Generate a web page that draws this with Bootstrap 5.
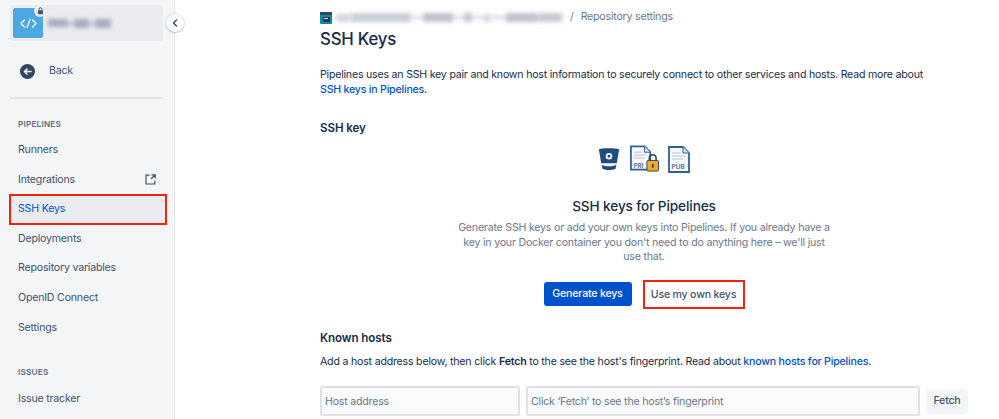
<!DOCTYPE html>
<html lang="en">
<head>
<meta charset="utf-8">
<title>SSH Keys</title>
<link href="https://cdn.jsdelivr.net/npm/bootstrap@5.3.0/dist/css/bootstrap.min.css" rel="stylesheet">
<style>
html,body{height:419px;overflow:hidden}
body{font-family:Inter,"Liberation Sans",sans-serif;font-size:10.6px;letter-spacing:-.2px;color:#172b4d;background:#fff;line-height:14.5px}
.shell{height:419px}
.side{width:175px;background:#f4f5f7;border-right:1px solid #e6e8ec;padding:5px 9px 0 10px;flex:none;position:relative}
.proj{height:36px;background:#ebecf0;border-radius:3px;padding:3px;gap:5px;width:153px}
.avatar{width:30px;height:30px;background:#4ba8e3;border-radius:2px;position:relative;flex:none}
.lockb{position:absolute;right:-3px;top:-3px;width:12px;height:12px;border-radius:50%;background:#ebecf0}
.blurbox{filter:blur(2px);gap:1px;align-items:center}
.blurbox i{display:block;background:#a5acbc}
.backrow{height:28px;margin-top:16px;padding-left:10px;gap:14px;color:#42526e}
.backic{width:15px;height:15px;flex:none}
.rule{height:2px;background:#e4e6ea;width:153px;margin-top:12px}
.grp{font-size:8.2px;font-weight:600;color:#5e6c84;letter-spacing:.2px;padding-left:8px;line-height:12px}
.grp1{margin-top:19px;margin-bottom:5.5px}
.grp2{margin-top:23.5px;margin-bottom:6px}
.item{height:29.6px;padding:0 10px 0 8px;color:#42526e;width:156px;justify-content:space-between}
.item.sel{background:#ebecf0;color:#0052cc;outline:2px solid #f5210f;outline-offset:-1px}
.toggle{position:absolute;left:166px;top:14px;width:18px;height:18px;border-radius:50%;background:#fff;box-shadow:0 0 0 1px rgba(9,30,66,.08),0 1px 2px rgba(9,30,66,.2);z-index:2}
.mainp{padding:0 31px 0 145px;flex:1;min-width:0}
.crumbs{height:13px;margin-top:11px;color:#6b778c;gap:0}
.crumbic{width:12px;height:12px;flex:none}
.ptitle{font-size:16.8px;font-weight:500;line-height:24px;letter-spacing:-.2px;margin:3px 0 0;color:#172b4d}
.intro{margin:17px 0 0;color:#172b4d;line-height:14.5px;width:610px;letter-spacing:-.21px}
a.lnk{color:#0052cc;text-decoration:none;font-weight:500}
.sub{font-size:11.6px;font-weight:600;line-height:16px;margin:0;color:#172b4d;letter-spacing:-.1px}
.sub1{margin-top:23px}
.icons{gap:9.5px;margin-top:9px;height:28px}
.empt{font-size:13.6px;font-weight:500;line-height:20px;margin:23px 0 0;color:#172b4d;letter-spacing:-.1px}
.desc{width:374.5px;color:#6b778c;margin:5px 0 0;line-height:14.6px}
.acts{gap:11px;margin-top:15px;position:relative}
.bluebtn{background:#0052cc;color:#fff;border:0;border-radius:3px;font-size:10.6px;letter-spacing:-.2px;font-weight:500;height:24px;width:88px;padding:0;line-height:24px}
.plainbtn{background:#fff;color:#42526e;border:2px solid #f5210f;border-radius:0;font-size:10.6px;letter-spacing:-.2px;font-weight:500;width:102px;height:29px;padding:0;line-height:25px}
.sub2{margin-top:21px}
.hostp{margin:8px 0 0;line-height:15px}
.hostrow{gap:6px;margin-top:17.5px}
.fld{height:30px;background:#fafbfc;border:2px solid #dfe1e6;border-radius:3px;color:#6b778c;padding:0 3px;font-size:10.6px;letter-spacing:-.2px;line-height:26px;box-shadow:none}
.fld::placeholder{color:#6b778c;opacity:1}
.fld1{width:200px;flex:none}
.fld2{width:394px;flex:none}
.fetchbtn{background:#f4f5f7;color:#42526e;border:0;border-radius:3px;font-size:10.6px;letter-spacing:-.2px;font-weight:500;width:46px;height:25px;padding:0;margin-left:0}
</style>
</head>
<body>
<div class="d-flex shell">
  <aside class="side">
    <div class="proj d-flex align-items-center">
      <div class="avatar d-flex align-items-center justify-content-center">
        <svg width="17" height="11" viewBox="0 0 17 11" fill="none" stroke="#fff" stroke-width="1.2" stroke-linecap="round" stroke-linejoin="round"><path d="M4.5 2 1 5.5 4.5 9M12.5 2 16 5.5 12.5 9M10 1.2 7 9.8"/></svg>
        <span class="lockb d-flex align-items-center justify-content-center">
          <svg width="7" height="8" viewBox="0 0 7 8"><path d="M2 3.5V2.3a1.5 1.5 0 0 1 3 0v1.2" fill="none" stroke="#42526e" stroke-width="1"/><rect x="1" y="3.3" width="5" height="4" rx=".8" fill="#42526e"/></svg>
        </span>
      </div>
      <div class="blurbox d-flex"><i style="width:20px;height:8px"></i><i style="width:4px;height:3px"></i><i style="width:15px;height:9px"></i><i style="width:4px;height:3px"></i><i style="width:16px;height:9px"></i></div>
    </div>
    <div class="backrow d-flex align-items-center">
      <svg class="backic" viewBox="0 0 15 15"><circle cx="7.5" cy="7.5" r="7.5" fill="#344563"/><path d="M11 7.5H4.6M7 5 4.4 7.5 7 10" fill="none" stroke="#fff" stroke-width="1.5" stroke-linecap="round" stroke-linejoin="round"/></svg>
      <span>Back</span>
    </div>
    <div class="rule"></div>
    <div class="grp grp1">PIPELINES</div>
    <div class="item d-flex align-items-center">Runners</div>
    <div class="item d-flex align-items-center"><span>Integrations</span>
      <svg width="11" height="11" viewBox="0 0 11 11" fill="none" stroke="#42526e" stroke-width="1.2"><path d="M4.5 1.2H1v8.8h8.800V6.500M6 5 10 1M6.500 .8H10.200V4.500"/></svg>
    </div>
    <div class="item sel d-flex align-items-center">SSH Keys</div>
    <div class="item d-flex align-items-center">Deployments</div>
    <div class="item d-flex align-items-center">Repository variables</div>
    <div class="item d-flex align-items-center">OpenID Connect</div>
    <div class="item d-flex align-items-center">Settings</div>
    <div class="grp grp2">ISSUES</div>
    <div class="item d-flex align-items-center">Issue tracker</div>
    <button class="toggle btn p-0 d-flex align-items-center justify-content-center" aria-label="Collapse">
      <svg width="6" height="8" viewBox="0 0 6 8" fill="none" stroke="#42526e" stroke-width="1.6" stroke-linecap="round" stroke-linejoin="round"><path d="M4.500 1 1.500 4l3 3"/></svg>
    </button>
  </aside>
  <main class="mainp">
    <div class="crumbs d-flex align-items-center">
      <svg class="crumbic" viewBox="0 0 12 12"><rect width="12" height="12" rx="1" fill="#0e8a9c"/><rect x="0" y="0" width="12" height="3" fill="#2f4560"/><rect x="3" y="5" width="7" height="5" fill="#26354f"/><rect x="4" y="6" width="4" height="1" fill="#d9e2ec"/></svg>
      <div class="blurbox d-flex ms-1"><i style="width:14px;height:8px;opacity:.5"></i><i style="width:60px;height:9px;opacity:.6"></i><i style="width:10px;height:3px;opacity:.5"></i><i style="width:30px;height:9px;opacity:.75"></i><i style="width:9px;height:3px;opacity:.5"></i><i style="width:8px;height:9px;opacity:.7"></i><i style="width:10px;height:3px;opacity:.5"></i><i style="width:6px;height:8px;opacity:.5"></i><i style="width:14px;height:3px;opacity:.5"></i><i style="width:32px;height:9px;opacity:.75"></i><i style="width:23px;height:9px;opacity:.65"></i></div>
      <span style="margin-left:8px">/</span><span style="margin-left:7px">Repository settings</span>
    </div>
    <h1 class="ptitle">SSH Keys</h1>
    <p class="intro">Pipelines uses an SSH key pair and known host information to securely connect to other services and hosts. Read more about <a class="lnk" href="#">SSH keys in Pipelines</a>.</p>
    <h2 class="sub sub1">SSH key</h2>
    <section class="d-flex flex-column align-items-center text-center">
      <div class="icons d-flex align-items-center justify-content-center">
        <svg width="22" height="26" viewBox="0 0 24 26"><path d="M1 2.500C1 .8 23 .8 23 2.500L20.500 17.500H3.500Z" fill="#1d4c80"/><circle cx="12" cy="10" r="3.600" fill="#fff"/><circle cx="12" cy="10" r="1.600" fill="#1d4c80"/><path d="M4 19.500C9 21.500 15 21.500 20 19.500L19.200 23.500C15 25.500 9 25.500 4.800 23.500Z" fill="#1d4c80"/></svg>
        <svg width="29" height="28" viewBox="0 0 30 28"><path d="M1 1h14l6 6v18H1Z" fill="#f4f7fb" stroke="#2f5f95" stroke-width="1.800"/><path d="M15 1v6h6" fill="#dce6f2" stroke="#2f5f95" stroke-width="1"/><path d="M4 7h9M4 10h13M4 13h11" stroke="#b8c4d4" stroke-width="1"/><text x="3.500" y="23" font-size="6.500" font-weight="700" letter-spacing="0" fill="#6b778c" font-family="Inter,'Liberation Sans',sans-serif">PRI</text><path d="M20 16v-3a3.500 3.500 0 0 1 7 0v3" fill="none" stroke="#25466f" stroke-width="1.600"/><rect x="17.500" y="15.500" width="12" height="11" rx="1.200" fill="#f2ac1c" stroke="#25466f" stroke-width="1"/><rect x="22.700" y="19" width="1.800" height="4" fill="#25466f"/></svg>
        <svg width="22" height="27" viewBox="0 0 22 27"><path d="M1 1h14l6 6v19H1Z" fill="#f4f7fb" stroke="#2f5f95" stroke-width="1.800"/><path d="M15 1v6h6" fill="#dce6f2" stroke="#2f5f95" stroke-width="1"/><path d="M4 7h9M4 10h13M4 13h11" stroke="#b8c4d4" stroke-width="1"/><text x="3.500" y="23" font-size="6.500" font-weight="700" letter-spacing="0" fill="#6b778c" font-family="Inter,'Liberation Sans',sans-serif">PUB</text></svg>
      </div>
      <h3 class="empt">SSH keys for Pipelines</h3>
      <p class="desc">Generate SSH keys or add your own keys into Pipelines. If you already have a key in your Docker container you don't need to do anything here – we'll just use that.</p>
      <div class="acts d-flex align-items-center">
        <button class="btn bluebtn">Generate keys</button>
        <button class="btn plainbtn">Use my own keys</button>
      </div>
    </section>
    <h2 class="sub sub2">Known hosts</h2>
    <p class="hostp">Add a host address below, then click <strong class="fw-semibold">Fetch</strong> to the see the host's fingerprint. Read about <a class="lnk" href="#">known hosts for Pipelines</a>.</p>
    <div class="hostrow d-flex align-items-center">
      <input class="form-control fld fld1" placeholder="Host address">
      <input class="form-control fld fld2" placeholder="Click ‘Fetch’ to see the host’s fingerprint">
      <button class="btn fetchbtn">Fetch</button>
    </div>
  </main>
</div>
<script src="https://cdn.jsdelivr.net/npm/bootstrap@5.3.0/dist/js/bootstrap.bundle.min.js"></script>
</body>
</html>
